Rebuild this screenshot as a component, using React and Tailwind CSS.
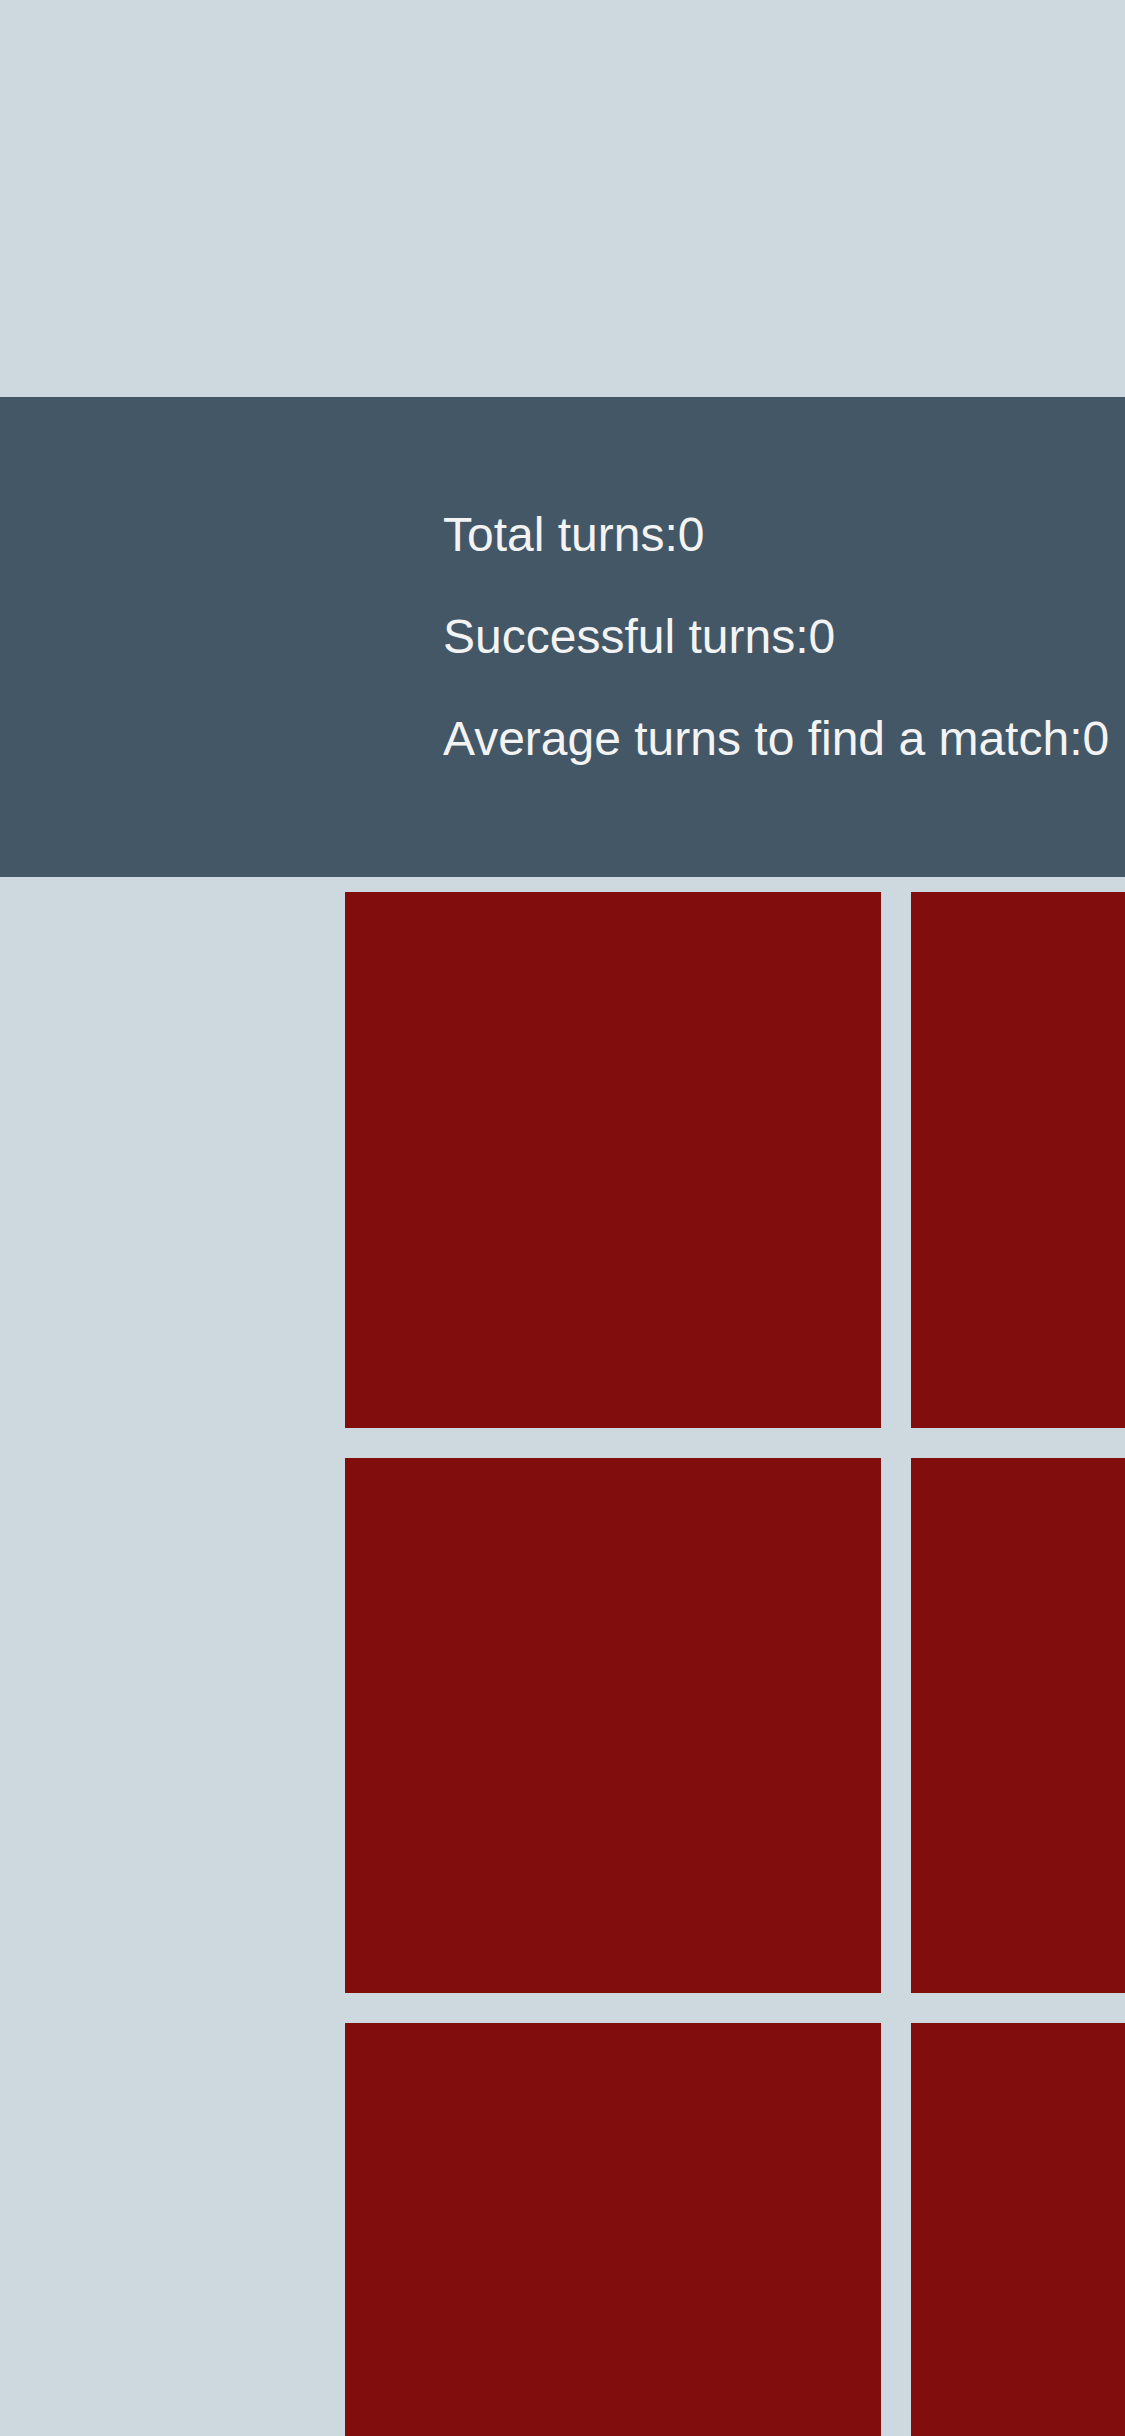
const stats = [
  { label: "Total turns", value: 0 },
  { label: "Successful turns", value: 0 },
  { label: "Average turns to find a match", value: 0 },
];

const cards = Array.from({ length: 12 }, (_, i) => i);

export default function App() {
  return (
    <div className="min-h-screen w-full overflow-hidden bg-[#ced9df] font-['Liberation_Sans',Arial,sans-serif]">
      {/* top spacer */}
      <div className="h-[397px]" />

      {/* score board */}
      <div className="bg-[#435766] pt-[110px] pb-[111px] pl-[443px]">
        <div className="flex flex-col gap-[47px]">
          {stats.map((s) => (
            <p key={s.label} className="text-[48px] leading-[55px] text-[#f3f3f3] whitespace-nowrap">
              {s.label}:{s.value}
            </p>
          ))}
        </div>
      </div>

      {/* card board */}
      <div className="mt-[15px] pl-[345px]">
        <div className="grid grid-cols-[repeat(4,536px)] gap-x-[30px] gap-y-[30px] w-max">
          {cards.map((c) => (
            <div key={c} className="h-[535.5px] bg-[#820d0d]" />
          ))}
        </div>
      </div>
    </div>
  );
}
